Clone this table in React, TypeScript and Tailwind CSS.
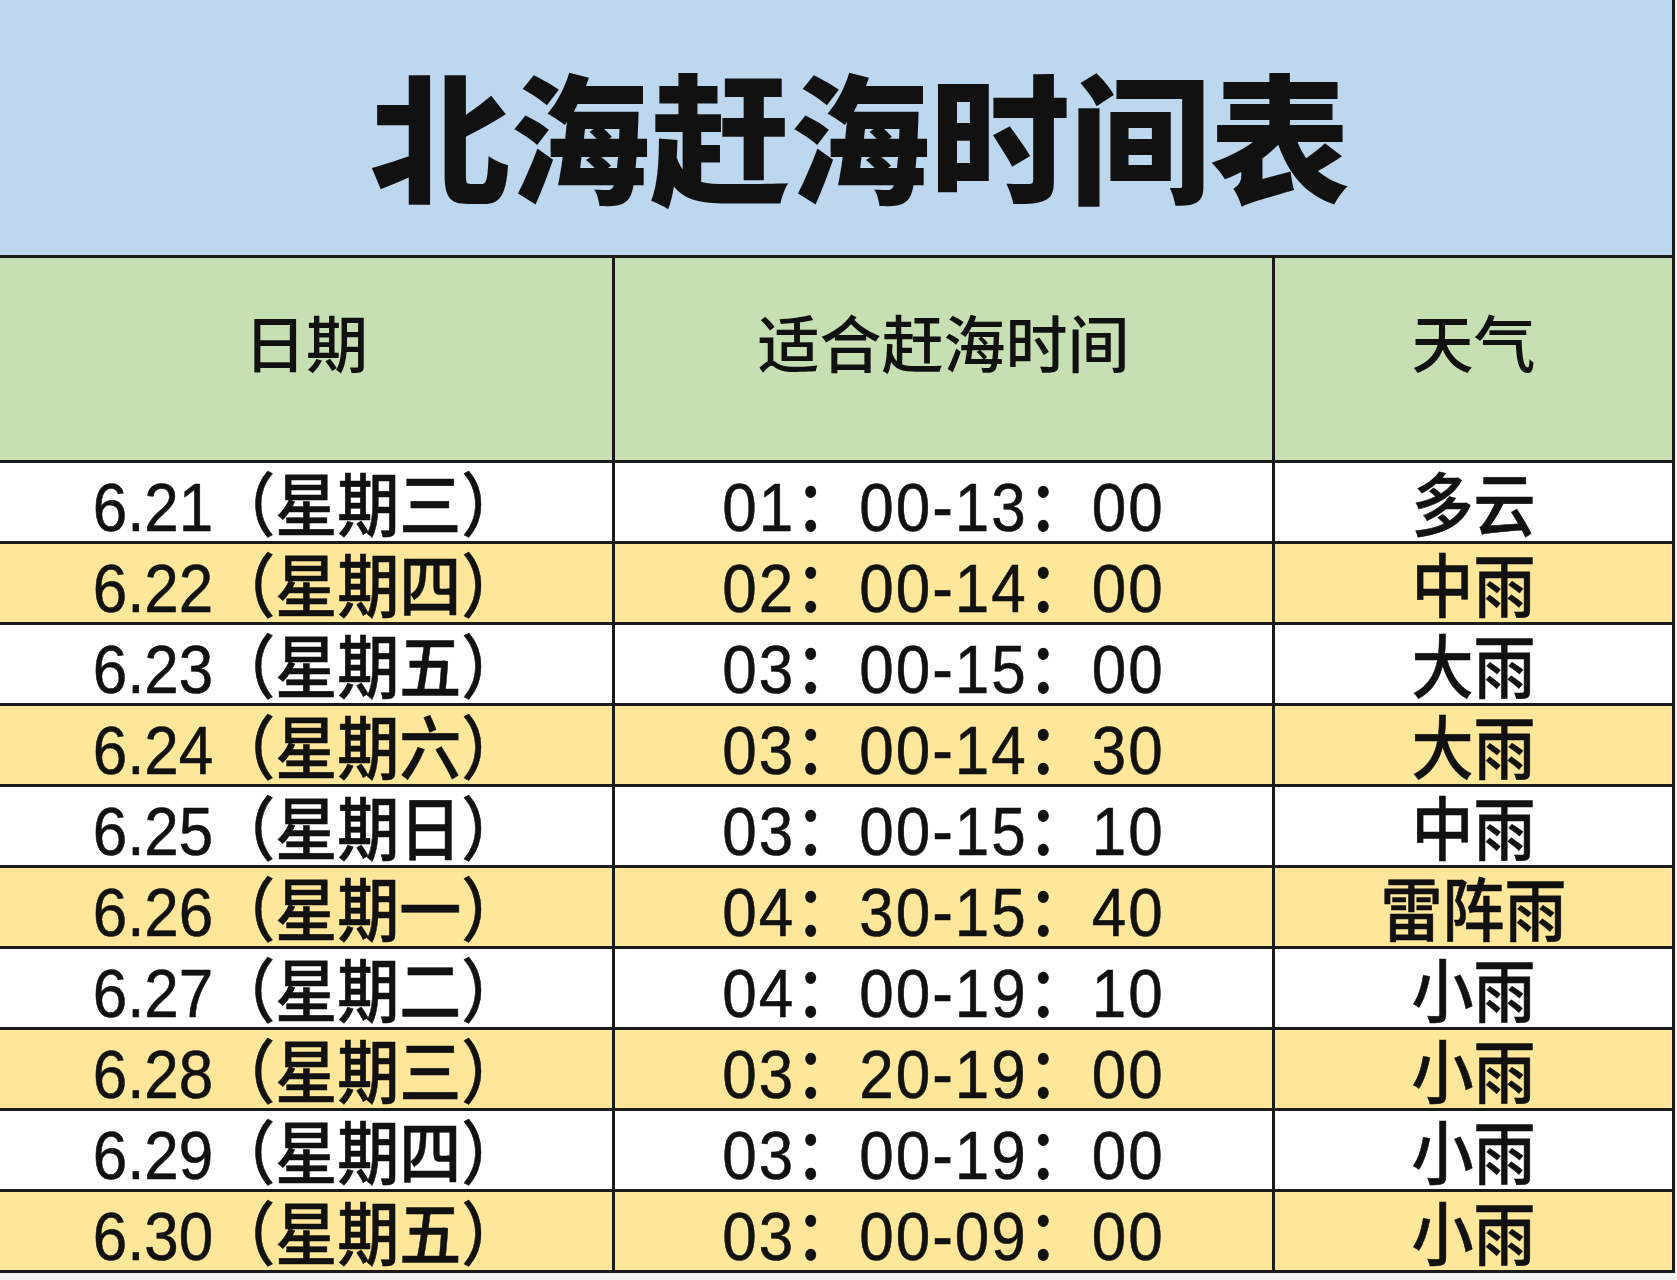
import React from 'react';

const rows = [
  { date: '6.21（星期三）', time: '01：00-13：00', weather: '多云' },
  { date: '6.22（星期四）', time: '02：00-14：00', weather: '中雨' },
  { date: '6.23（星期五）', time: '03：00-15：00', weather: '大雨' },
  { date: '6.24（星期六）', time: '03：00-14：30', weather: '大雨' },
  { date: '6.25（星期日）', time: '03：00-15：10', weather: '中雨' },
  { date: '6.26（星期一）', time: '04：30-15：40', weather: '雷阵雨' },
  { date: '6.27（星期二）', time: '04：00-19：10', weather: '小雨' },
  { date: '6.28（星期三）', time: '03：20-19：00', weather: '小雨' },
  { date: '6.29（星期四）', time: '03：00-19：00', weather: '小雨' },
  { date: '6.30（星期五）', time: '03：00-09：00', weather: '小雨' },
];

const font = { fontFamily: '"Liberation Sans", "Noto Sans CJK SC", sans-serif' };

// the cell text in the sheet is a little taller than it is wide
const Tall: React.FC<{ children: React.ReactNode; className?: string }> = ({ children, className = '' }) => (
  <span className={`inline-block scale-y-[1.12] whitespace-nowrap font-medium [-webkit-text-stroke:0.5px_#111] ${className}`}>{children}</span>
);

export default function App() {
  return (
    <div className="w-[1677px] h-[1280px] bg-[#f2f2f2] text-[#111]" style={font}>
      <div className="w-[1675px] border-r-[3px] border-[#1a1a1a]">
        <div className="h-[258px] bg-[#bdd7ee] border-b-[3px] border-[#1a1a1a] flex items-center justify-center pt-[34px] pl-[48px]">
          <h1 className="text-[140px] font-black leading-none">北海赶海时间表</h1>
        </div>

        <div className="grid grid-cols-[615px_660px_1fr] h-[205px] bg-[#c6e0b4] border-b-[3px] border-[#1a1a1a] text-[62px] font-medium">
          <div className="flex items-center justify-center border-r-[3px] border-[#1a1a1a] pb-[26px]">日期</div>
          <div className="flex items-center justify-center border-r-[3px] border-[#1a1a1a] pb-[26px]">适合赶海时间</div>
          <div className="flex items-center justify-center pb-[26px]">天气</div>
        </div>

        {rows.map((row, i) => (
          <div
            key={row.date}
            className={`grid grid-cols-[615px_660px_1fr] h-[81px] border-b-[3px] border-[#1a1a1a] text-[62px] leading-none ${i % 2 === 1 ? 'bg-[#fee69b]' : 'bg-white'}`}
          >
            <div className="flex items-center justify-center border-r-[3px] border-[#1a1a1a] pt-[10px] pl-[4px]">
              <Tall>{row.date}</Tall>
            </div>
            <div className="flex items-center justify-center border-r-[3px] border-[#1a1a1a] pt-[10px]">
              <Tall className="tracking-[2px]">{row.time}</Tall>
            </div>
            <div className="flex items-center justify-center pt-[10px]">
              <Tall>{row.weather}</Tall>
            </div>
          </div>
        ))}
      </div>
    </div>
  );
}
